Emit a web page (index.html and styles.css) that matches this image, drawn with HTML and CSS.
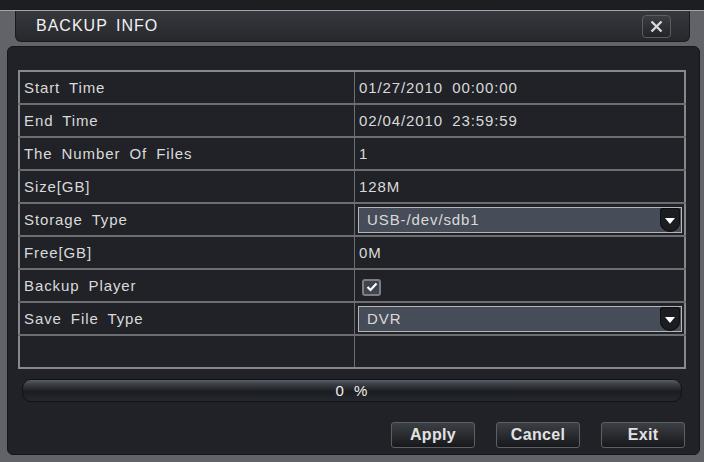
FILE: index.html
```html
<!DOCTYPE html>
<html lang="en">
<head>
  <meta charset="UTF-8" />
  <meta name="viewport" content="width=device-width, initial-scale=1.0" />
  <title>Backup Info</title>
  <link rel="stylesheet" href="styles.css">
</head>
<body>
  <div class="topstrip"></div>

  <div class="header">
    <span class="title">BACKUP INFO</span>
    <button class="close" type="button">
      <svg width="15" height="13" viewBox="0 0 15 13"><path d="M2.5 1.5 L12.5 11.5 M12.5 1.5 L2.5 11.5" stroke="#d8d8d8" stroke-width="2.4" fill="none"/></svg>
    </button>
  </div>

  <div class="panel">
    <table class="info">
      <tr><td class="key">Start Time</td><td>01/27/2010 00:00:00</td></tr>
      <tr><td class="key">End Time</td><td>02/04/2010 23:59:59</td></tr>
      <tr><td class="key">The Number Of Files</td><td>1</td></tr>
      <tr><td class="key">Size[GB]</td><td>128M</td></tr>
      <tr><td class="key">Storage Type</td><td><div class="select"><span>USB-/dev/sdb1</span><i class="arrow"></i></div></td></tr>
      <tr><td class="key">Free[GB]</td><td>0M</td></tr>
      <tr><td class="key">Backup Player</td><td><span class="check"><svg width="12" height="10" viewBox="0 0 12 10"><path d="M1.5 5 L4.5 8 L10.5 1.5" stroke="#fff" stroke-width="2.2" fill="none"/></svg></span></td></tr>
      <tr><td class="key">Save File Type</td><td><div class="select"><span>DVR</span><i class="arrow"></i></div></td></tr>
      <tr><td class="key"></td><td></td></tr>
    </table>

    <div class="progress">0 %</div>

    <div class="actions">
      <button type="button">Apply</button>
      <button type="button">Cancel</button>
      <button type="button">Exit</button>
    </div>
  </div>
</body>
</html>
```

FILE: styles.css
```css
body { margin: 0; background: #626368; font-family: "Liberation Sans", Arial, sans-serif; color: #d8d8d8; width: 704px; height: 462px; overflow: hidden; }
.topstrip { height: 10px; background: #1d1e22; border-bottom: 1px solid #a4a6aa; }

.header { margin-left: 15px; width: 675px; height: 31px; box-sizing: border-box; background: linear-gradient(#35383e, #26282c); border-radius: 0 0 6px 6px; border: 1px solid #1a1b1e; border-top: none; display: flex; align-items: center; justify-content: space-between; padding: 0 18px 0 20px; }
.title { font-size: 16px; letter-spacing: 1px; word-spacing: 3px; color: #f2f2f2; }
.close { width: 29px; height: 23px; padding: 0; background: linear-gradient(#3a3d43, #222428); border: 1px solid #5a5d62; border-radius: 4px; display: flex; align-items: center; justify-content: center; margin-top: 1px; }

.panel { margin: 4px 4px 0 7px; height: 409px; box-sizing: border-box; background: #202227; border: 1px solid #151619; border-radius: 6px; padding: 23px 13px 0 10px; }

.info { width: 668px; border-collapse: collapse; border: 2px solid #86888c; }
.info td { height: 31px; padding: 0 0 0 4px; border-top: 2px solid #6c6e72; font-size: 15px; letter-spacing: 0.9px; word-spacing: 4px; color: #dadada; }
.info td.key { width: 330px; border-right: 1px solid #6c6e72; }
.info tr:first-child td { border-top: none; }

.select { width: 324px; height: 26px; box-sizing: border-box; margin-left: -1px; background: #464d58; border: 1px solid #b4b6ba; display: flex; align-items: center; justify-content: space-between; padding-left: 8px; }
.arrow { width: 20px; height: 24px; margin-right: 1px; background: #1b1d21; border-radius: 3px 3px 10px 10px; box-shadow: inset 0 0 0 1px #0e0f11; position: relative; }
.arrow::after { content: ""; position: absolute; left: 5px; top: 10px; border-left: 5px solid transparent; border-right: 5px solid transparent; border-top: 6px solid #ffffff; }

.check { display: inline-flex; width: 19px; height: 17px; box-sizing: border-box; margin-left: 3px; margin-top: 3px; background: #3e4551; border: 2px solid #7c7e82; border-radius: 3px; align-items: center; justify-content: center; }

.progress { margin: 10px 4px 0 4px; height: 23px; border-radius: 9px; background: linear-gradient(#5a5f68 0%, #3a3e45 20%, #1b1d21 55%, #25282e 100%); border: 1px solid #111214; box-sizing: border-box; text-align: center; line-height: 21px; font-size: 15px; letter-spacing: 1px; word-spacing: 4px; color: #f0f0f0; }

.actions { display: flex; justify-content: flex-end; gap: 21px; margin-top: 20px; padding-right: 1px; }
.actions button { width: 84px; height: 26px; background: linear-gradient(#3c3f45, #17181b); border: 1px solid #5c5f64; border-radius: 3px; font-family: "Liberation Sans", Arial, sans-serif; font-size: 16px; font-weight: bold; letter-spacing: 0.3px; color: #e2e2e2; padding: 0; }
```
